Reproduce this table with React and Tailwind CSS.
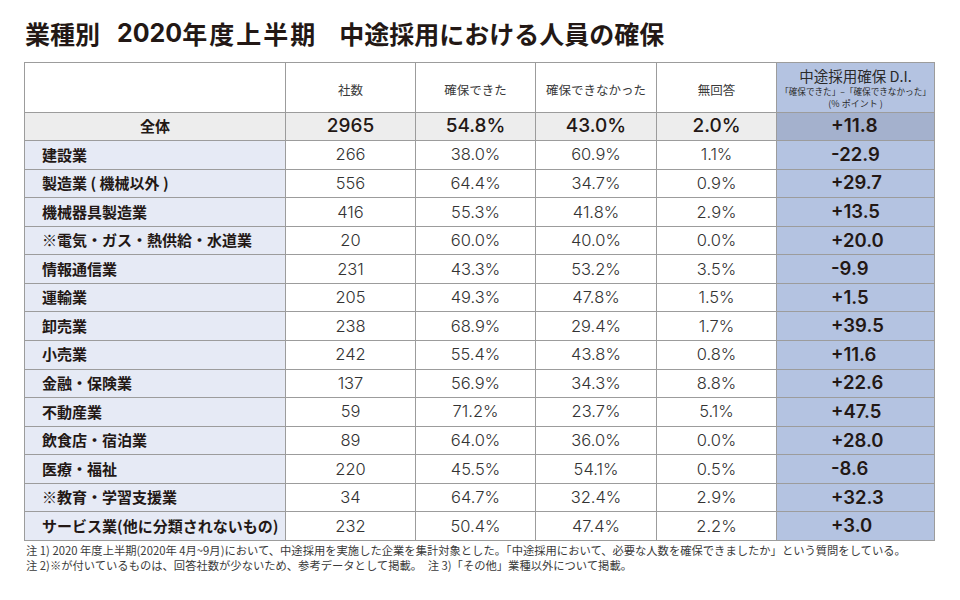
import React from "react";

const JP = { fontFamily: '"Noto Sans CJK JP", "Noto Sans", sans-serif' };
const NUM = { fontFamily: 'Inter, "Noto Sans CJK JP", sans-serif' };

const rows = [
  ["建設業", "266", "38.0%", "60.9%", "1.1%", "-22.9"],
  ["製造業 ( 機械以外 )", "556", "64.4%", "34.7%", "0.9%", "+29.7"],
  ["機械器具製造業", "416", "55.3%", "41.8%", "2.9%", "+13.5"],
  ["※電気・ガス・熱供給・水道業", "20", "60.0%", "40.0%", "0.0%", "+20.0"],
  ["情報通信業", "231", "43.3%", "53.2%", "3.5%", "-9.9"],
  ["運輸業", "205", "49.3%", "47.8%", "1.5%", "+1.5"],
  ["卸売業", "238", "68.9%", "29.4%", "1.7%", "+39.5"],
  ["小売業", "242", "55.4%", "43.8%", "0.8%", "+11.6"],
  ["金融・保険業", "137", "56.9%", "34.3%", "8.8%", "+22.6"],
  ["不動産業", "59", "71.2%", "23.7%", "5.1%", "+47.5"],
  ["飲食店・宿泊業", "89", "64.0%", "36.0%", "0.0%", "+28.0"],
  ["医療・福祉", "220", "45.5%", "54.1%", "0.5%", "-8.6"],
  ["※教育・学習支援業", "34", "64.7%", "32.4%", "2.9%", "+32.3"],
  ["サービス業(他に分類されないもの)", "232", "50.4%", "47.4%", "2.2%", "+3.0"],
];

const cell = "border-r border-b border-[#9c9c9c]";

export default function App() {
  return (
    <div className="w-[960px] h-[600px] bg-white text-[#231815] overflow-hidden" style={JP}>
      <div className="pt-[16px] pl-[25px] text-[25px] leading-[34px] font-bold flex items-center whitespace-nowrap" style={JP}>
        <span>業種別</span>
        <span className="ml-[17px]" style={NUM}>2020</span>
        <span className="tracking-[2px]">年度上半期</span>
        <span className="ml-[22px]">中途採用における人員の確保</span>
      </div>

      <div className="mt-[12px] ml-[24px] w-[911px] grid grid-cols-[261px_130px_120px_121px_120px_158px] border-l border-t border-[#9c9c9c]">
        {/* header */}
        <div className={`${cell} h-[50px] bg-white`}></div>
        {["社数", "確保できた", "確保できなかった", "無回答"].map((t) => (
          <div key={t} className={`${cell} h-[50px] bg-white flex items-center justify-center pt-[5px] text-[12.5px] text-[#3a3a3a]`}>
            {t}
          </div>
        ))}
        <div className={`${cell} h-[50px] bg-[#b4c3e1] flex flex-col items-center justify-center text-[#2a2a2a]`}>
          <div className="text-[14.5px] leading-[18px]">中途採用確保 D.I.</div>
          <div className="text-[8.6px] leading-[13px] whitespace-nowrap">「確保できた」–「確保できなかった」</div>
          <div className="text-[9px] leading-[11px]">(% ポイント )</div>
        </div>

        {/* total */}
        <div className={`${cell} h-[28px] bg-[#ededed] flex items-center justify-center text-[15px] font-bold`}>全体</div>
        {["2965", "54.8%", "43.0%", "2.0%"].map((t, i) => (
          <div key={i} className={`${cell} h-[28px] bg-[#ededed] flex items-center justify-center text-[19px] font-medium`} style={NUM}>
            {t}
          </div>
        ))}
        <div className={`${cell} h-[28px] bg-[#a4b1cd] flex items-center pl-[54px] text-[19px] font-semibold`} style={NUM}>
          +11.8
        </div>

        {rows.map((r, idx) => (
          <React.Fragment key={idx}>
            <div className={`${cell} h-[28.57px] bg-[#e6eaf5] flex items-center pl-[17px] text-[15px] font-bold whitespace-nowrap`}>
              {r[0]}
            </div>
            {r.slice(1, 5).map((t, i) => (
              <div key={i} className={`${cell} h-[28.57px] bg-white flex items-center justify-center text-[16.5px] font-light text-[#333]`} style={NUM}>
                {t}
              </div>
            ))}
            <div className={`${cell} h-[28.57px] bg-[#b4c3e1] flex items-center pl-[54px] text-[18.5px] font-semibold`} style={NUM}>
              {r[5]}
            </div>
          </React.Fragment>
        ))}
      </div>

      <div className="mt-[2px] pl-[26px] text-[11.3px] leading-[15.5px] text-[#3a3a3a] whitespace-nowrap">
        <div>注 1) 2020 年度上半期(2020年 4月~9月)において、中途採用を実施した企業を集計対象とした。「中途採用において、必要な人数を確保できましたか」という質問をしている。</div>
        <div>注 2)※が付いているものは、回答社数が少ないため、参考データとして掲載。　注 3)「その他」業種以外について掲載。</div>
      </div>
    </div>
  );
}
